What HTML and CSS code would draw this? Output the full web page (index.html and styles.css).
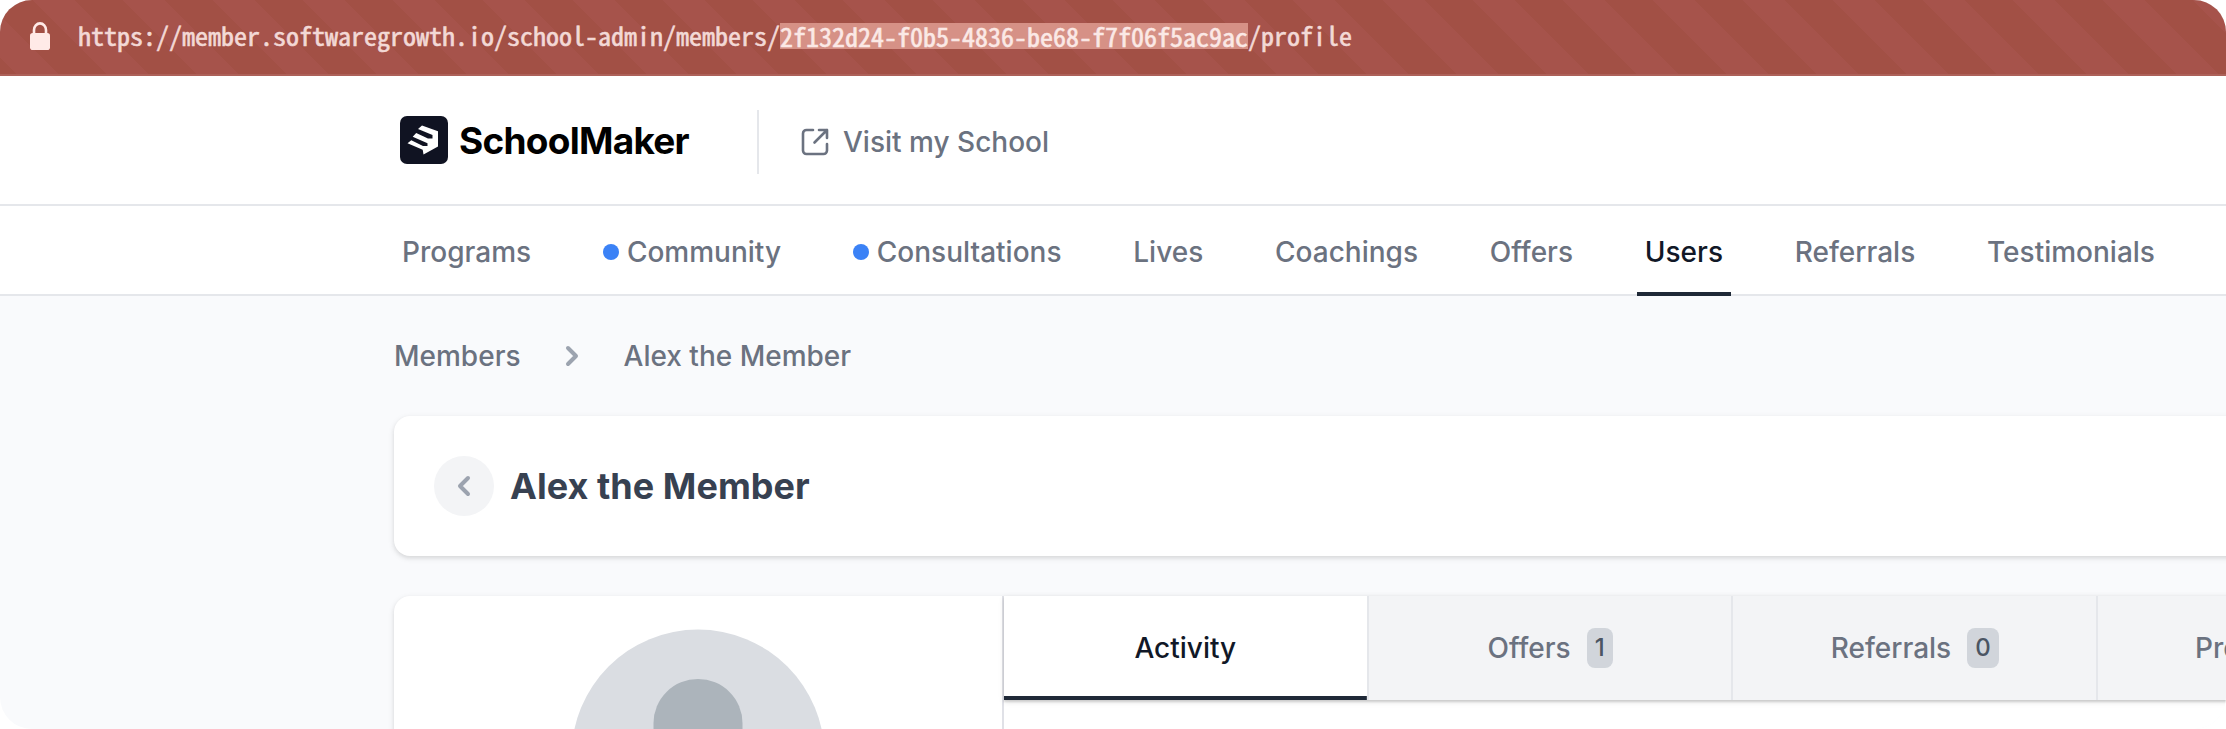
FILE: index.html
```html
<!DOCTYPE html>
<html lang="en">
<head>
<meta charset="utf-8">
<title>SchoolMaker</title>
<link rel="stylesheet" href="styles.css">
</head>
<body>
<div class="window">
  <div class="urlbar">
    <svg class="lock" width="20" height="28" viewBox="0 0 20 28"><rect x="0" y="11" width="20" height="17" rx="2.800" fill="#ffeae7"/><path d="M4 13V8a6 6.600 0 0 1 12 0V13" fill="none" stroke="#ffeae7" stroke-width="2.600"/></svg>
    <span class="url">https://member.softwaregrowth.io/school-admin/members/<mark class="picked">2f132d24-f0b5-4836-be68-f7f06f5ac9ac</mark>/profile</span>
  </div>
  <header class="header">
    <svg class="logo" width="48" height="48" viewBox="0 0 48 48"><rect width="48" height="48" rx="7" fill="#101322"/><path d="M22 9.500L38 15.200V30.500L23.500 38.500L22.700 33.800L7.500 27.300L11.300 24.300L23 30H27.500V27.200L12.700 20.700L16.200 17L28 22.500H32.500V19L18 13Z" fill="#fff"/></svg>
    <span class="brand">SchoolMaker</span>
    <a class="visit"><svg width="28" height="28" viewBox="0 0 28 28" fill="none" stroke="#6b7280" stroke-width="2.600" stroke-linecap="round" stroke-linejoin="round"><path d="M12 2H5.500A3.500 3.500 0 0 0 2 5.500v17A3.500 3.500 0 0 0 5.500 26h17a3.500 3.500 0 0 0 3.500-3.500V16M18 2h8v8M26 2L13.500 14.500"/></svg>Visit my School</a>
  </header>
  <nav class="nav">
    <a class="item">Programs</a>
    <a class="item dotted">Community</a>
    <a class="item dotted">Consultations</a>
    <a class="item">Lives</a>
    <a class="item">Coachings</a>
    <a class="item">Offers</a>
    <a class="item active">Users</a>
    <a class="item">Referrals</a>
    <a class="item">Testimonials</a>
  </nav>
  <main class="main">
    <div class="crumbs"><span>Members</span><svg width="16" height="24" viewBox="0 0 16 24" fill="none" stroke="#9ca3af" stroke-width="4" stroke-linecap="round" stroke-linejoin="round"><path d="M4 4l8 8l-8 8"/></svg><span>Alex the Member</span></div>
    <section class="card title-card">
      <span class="back"><svg width="16" height="24" viewBox="0 0 16 24" fill="none" stroke="#9ca3af" stroke-width="4" stroke-linecap="round" stroke-linejoin="round"><path d="M12 4l-8 8l8 8"/></svg></span>
      <h1 class="name">Alex the Member</h1>
    </section>
    <section class="card detail">
      <aside class="person"><svg width="256" height="256" viewBox="0 0 256 256"><circle cx="128" cy="128" r="126.500" fill="#dadde2"/><path d="M83.500 95a44.500 44 0 0 1 89 0v10a44.500 44 0 0 1-89 0z" fill="#acb4bb"/></svg></aside>
      <div class="tabs">
        <a class="tab current">Activity</a>
        <a class="tab">Offers<b class="count">1</b></a>
        <a class="tab">Referrals<b class="count">0</b></a>
        <a class="tab last">Programs</a>
      </div>
    </section>
  </main>
</div>
</body>
</html>
```
FILE: styles.css
```css
* { box-sizing: border-box; }
html { background: #fff; }
body { margin: 0; font-family: Inter, "Liberation Sans", sans-serif; font-weight: 500; font-size: 28px; color: #6b7280; }
.window { width: 2226px; height: 729px; overflow: hidden; border-radius: 32px; background: #f9fafc; white-space: nowrap; }
.urlbar { height: 76px; display: flex; padding: 18px 0 0 30px; border-bottom: 2px solid #ad6159; background: repeating-linear-gradient(45deg, #a25045 0 11.7px, #a6534b 11.7px 41.5px, #a25045 41.5px 63.64px); }
.lock { margin-top: 4px; flex: none; }
.url { margin-left: 28px; height: 36px; font: 500 26px/36px "Noto Sans Mono CJK SC", "DejaVu Sans Mono", monospace; color: #f3d9d6; -webkit-text-stroke: 0.6px currentColor; position: relative; top: -1px; }
.picked { display: inline-block; height: 26px; margin-top: 6px; line-height: 26px; background: #d69186; color: #fbe9e6; vertical-align: top; }
.header { height: 130px; padding: 34px 0 0 400px; display: flex; align-items: flex-start; background: #fff; border-bottom: 2px solid #e5e7eb; }
.logo { flex: none; margin-top: 6px; }
.brand { width: 298px; margin-left: 11px; height: 64px; line-height: 61px; font-size: 37px; font-weight: 700; letter-spacing: -0.75px; color: #000; }
.visit { display: flex; align-items: center; height: 64px; padding-left: 42px; border-left: 2px solid #e5e7eb; }
.visit svg { margin-right: 14px; }
.nav { height: 90px; padding-left: 394px; display: flex; gap: 55.8px; background: #fff; border-bottom: 2px solid #e5e7eb; }
.item { height: 90px; padding: 2px 8px 0; display: flex; align-items: center; }
.dotted::before { content: ""; width: 16px; height: 16px; margin-right: 8px; border-radius: 50%; background: #3b82f6; }
.active { color: #111827; background: linear-gradient(#1f2937, #1f2937) bottom / 100% 4px no-repeat; }
.main { padding-left: 394px; }
.crumbs { height: 120px; display: flex; align-items: center; }
.crumbs svg { margin: 0 44px 0 43px; }
.card { width: 1980px; background: #fff; border-radius: 16px; box-shadow: 0 2px 6px rgba(0,0,0,.1), 0 2px 4px rgba(0,0,0,.06); }
.title-card { height: 140px; padding-left: 40px; display: flex; align-items: center; }
.back { width: 60px; height: 60px; border-radius: 50%; background: #f3f4f6; display: flex; align-items: center; justify-content: center; }
.name { margin: 0 0 0 16px; font-size: 36px; font-weight: 700; letter-spacing: 0.05px; color: #374151; }
.detail { margin-top: 40px; height: 400px; display: flex; }
.person { width: 610px; flex: none; border-right: 2px solid #e0e1e7; display: flex; justify-content: center; padding-top: 32px; }
.tabs { flex: none; display: flex; height: 104px; box-shadow: 0 2px 6px rgba(0,0,0,.1), 0 2px 2px rgba(0,0,0,.14); }
.tab { width: 364.7px; flex: none; display: flex; align-items: center; justify-content: center; background: #f3f4f6; border-right: 2px solid #e5e7eb; }
.last { justify-content: flex-start; padding-left: 97px; }
.current { background: linear-gradient(#1f2937, #1f2937) bottom / 100% 4px no-repeat #fff; color: #111827; }
.count { margin-left: 16px; height: 40px; padding: 0 8px; border-radius: 8px; background: #d1d5db; color: #4b5563; font-size: 24px; line-height: 39px; font-weight: 500; }
```
